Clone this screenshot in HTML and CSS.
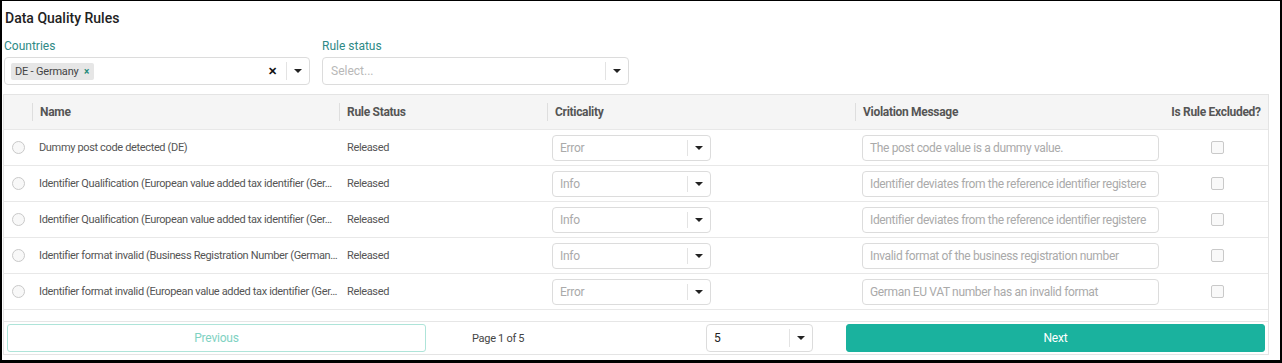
FILE: index.html
```html
<!DOCTYPE html>
<html lang="en">
<head>
  <meta charset="UTF-8" />
  <title>Data Quality Rules</title>
  <link rel="stylesheet" href="styles.css">
</head>
<body>
  <div class="frame">
    <h2 class="title">Data Quality Rules</h2>

    <div class="filters">
      <div class="filter">
        <label>Countries</label>
        <div class="select">
          <div class="select-value">
            <span class="chip">DE - Germany <b>&times;</b></span>
          </div>
          <span class="clear">&#x2715;</span>
          <span class="sep"></span>
          <span class="arrow"></span>
        </div>
      </div>
      <div class="filter">
        <label>Rule status</label>
        <div class="select">
          <div class="select-value placeholder">Select...</div>
          <span class="sep"></span>
          <span class="arrow"></span>
        </div>
      </div>
    </div>

    <div class="rt">
      <div class="rt-head">
        <div class="th"></div>
        <div class="th"><span class="bar"></span>Name</div>
        <div class="th"><span class="bar"></span>Rule Status</div>
        <div class="th"><span class="bar"></span>Criticality</div>
        <div class="th"><span class="bar"></span>Violation Message</div>
        <div class="th center">Is Rule Excluded?</div>
      </div>

      <div class="rt-row">
        <div class="td"><span class="radio"></span></div>
        <div class="td name">Dummy post code detected (DE)</div>
        <div class="td status">Released</div>
        <div class="td"><div class="mini-select"><span>Error</span><span class="sep"></span><span class="arrow"></span></div></div>
        <div class="td"><div class="msg">The post code value is a dummy value.</div></div>
        <div class="td center"><span class="check"></span></div>
      </div>
      <div class="rt-row">
        <div class="td"><span class="radio"></span></div>
        <div class="td name">Identifier Qualification (European value added tax identifier (Ger…</div>
        <div class="td status">Released</div>
        <div class="td"><div class="mini-select"><span>Info</span><span class="sep"></span><span class="arrow"></span></div></div>
        <div class="td"><div class="msg">Identifier deviates from the reference identifier registere</div></div>
        <div class="td center"><span class="check"></span></div>
      </div>
      <div class="rt-row">
        <div class="td"><span class="radio"></span></div>
        <div class="td name">Identifier Qualification (European value added tax identifier (Ger…</div>
        <div class="td status">Released</div>
        <div class="td"><div class="mini-select"><span>Info</span><span class="sep"></span><span class="arrow"></span></div></div>
        <div class="td"><div class="msg">Identifier deviates from the reference identifier registere</div></div>
        <div class="td center"><span class="check"></span></div>
      </div>
      <div class="rt-row">
        <div class="td"><span class="radio"></span></div>
        <div class="td name">Identifier format invalid (Business Registration Number (German…</div>
        <div class="td status">Released</div>
        <div class="td"><div class="mini-select"><span>Info</span><span class="sep"></span><span class="arrow"></span></div></div>
        <div class="td"><div class="msg">Invalid format of the business registration number</div></div>
        <div class="td center"><span class="check"></span></div>
      </div>
      <div class="rt-row">
        <div class="td"><span class="radio"></span></div>
        <div class="td name">Identifier format invalid (European value added tax identifier (Ger…</div>
        <div class="td status">Released</div>
        <div class="td"><div class="mini-select"><span>Error</span><span class="sep"></span><span class="arrow"></span></div></div>
        <div class="td"><div class="msg">German EU VAT number has an invalid format</div></div>
        <div class="td center"><span class="check"></span></div>
      </div>

      <div class="pagination">
        <button class="btn btn-prev">Previous</button>
        <div class="page-center">
          <span class="page-info">Page 1 of 5</span>
          <div class="mini-select size"><span>5</span><span class="sep"></span><span class="arrow"></span></div>
        </div>
        <button class="btn btn-next">Next</button>
      </div>
    </div>
  </div>
</body>
</html>
```

FILE: styles.css
```css
* {
  box-sizing: border-box;
}

body {
  margin: 0;
  font-family: Roboto, "Liberation Sans", sans-serif;
  background: #fff;
}

.frame {
  width: 1282px;
  height: 363px;
  border: solid #000;
  border-width: 1px 2px 3px 2px;
  padding: 0 11px 0 1px;
  overflow: hidden;
}

.title {
  margin: 0;
  padding: 7px 0 0 2px;
  font-size: 14px;
  line-height: 20px;
  font-weight: 500;
  color: #222;
}

.filters {
  display: flex;
  gap: 12px;
  margin: 9px 0 0 1px;
}

.filter label {
  display: block;
  font-size: 12px;
  line-height: 16px;
  padding-top: 1px;
  color: #2e8a86;
  margin-bottom: 3px;
}

.filter:first-child {
  width: 306px;
}

.filter:last-child {
  width: 307px;
}

.select {
  display: flex;
  align-items: center;
  height: 28px;
  border: 1px solid #dcdcdc;
  border-radius: 4px;
  background: #fff;
}

.select-value {
  flex: 1;
  padding-left: 6px;
  font-size: 12px;
}

.placeholder {
  color: #b8b8b8;
  padding-left: 8px;
}

.chip {
  display: inline-block;
  background: #e6e6e6;
  color: #444;
  font-size: 11px;
  line-height: 17px;
  padding: 0 5px 0 4px;
  border-radius: 2px;
  letter-spacing: -0.2px;
}

.chip b {
  color: #1f8a7a;
  font-size: 10px;
  margin-left: 3px;
}

.clear {
  font-size: 11px;
  font-weight: 700;
  color: #111;
  margin-right: 9px;
}

.sep {
  width: 1px;
  align-self: stretch;
  margin: 4px 0;
  background: #e3e3e3;
}

.arrow {
  width: 22px;
  height: 4px;
  position: relative;
}

.arrow::after {
  content: "";
  position: absolute;
  left: 7px;
  top: 0;
  border-left: 4px solid transparent;
  border-right: 4px solid transparent;
  border-top: 4px solid #222;
}

.rt {
  margin-top: 9px;
  border: 1px solid #e4e4e4;
  height: 261px;
}

.rt-head,
.rt-row {
  display: grid;
  grid-template-columns: 28px 307px 208px 308px 309px 1fr;
}

.rt-head {
  background: #f5f5f5;
  height: 35px;
  border-bottom: 1px solid #e8e8e8;
}

.th {
  display: flex;
  align-items: center;
  font-size: 12px;
  font-weight: 700;
  color: #555;
  letter-spacing: -0.3px;
}

.th .bar {
  width: 1px;
  height: 18px;
  background: #dedede;
  margin-right: 7px;
}

.center {
  justify-content: center;
}

.rt-row {
  height: 36px;
  border-bottom: 1px solid #e8e8e8;
}

.td {
  display: flex;
  align-items: center;
  font-size: 11px;
  color: #555;
  min-width: 0;
  letter-spacing: -0.35px;
}

.td.name {
  padding-left: 7px;
  white-space: nowrap;
}

.td.status {
  padding-left: 8px;
}

.radio {
  width: 13px;
  height: 13px;
  border: 1px solid #c9c9c9;
  border-radius: 50%;
  margin-left: 8px;
  background: #f8f8f8;
}

.mini-select {
  display: flex;
  align-items: center;
  width: 159px;
  height: 26px;
  margin-left: 5px;
  border: 1px solid #dcdcdc;
  border-radius: 4px;
  font-size: 12px;
  color: #aaa;
  letter-spacing: -0.3px;
}

.mini-select span:first-child {
  flex: 1;
  padding-left: 7px;
}

.msg {
  width: 297px;
  height: 26px;
  margin-left: 7px;
  border: 1px solid #dcdcdc;
  border-radius: 4px;
  padding: 0 7px;
  font-size: 12px;
  line-height: 24px;
  color: #aaa;
  white-space: nowrap;
  letter-spacing: -0.35px;
}

.check {
  width: 13px;
  height: 13px;
  border: 1px solid #c9c9c9;
  border-radius: 2px;
  background: #f9f9f9;
  margin-left: 2px;
}

.pagination {
  display: flex;
  margin-top: 11px;
  padding: 2px 3px;
  border-top: 1px solid #e6e6e6;
}

.btn {
  width: 419px;
  height: 28px;
  border-radius: 3px;
  font-family: inherit;
  font-size: 12px;
  letter-spacing: -0.2px;
}

.btn-prev {
  background: #fff;
  border: 1px solid #aee4d9;
  color: #7fd2c2;
}

.btn-next {
  background: #1ab29e;
  border: 1px solid #1ab29e;
  color: #fff;
}

.page-center {
  flex: 1;
  display: flex;
  align-items: center;
  justify-content: space-between;
  padding: 0 33px 0 46px;
}

.page-info {
  font-size: 11px;
  color: #444;
  letter-spacing: -0.3px;
}

.mini-select.size {
  width: 107px;
  height: 28px;
  margin: 0;
  color: #222;
}
```
